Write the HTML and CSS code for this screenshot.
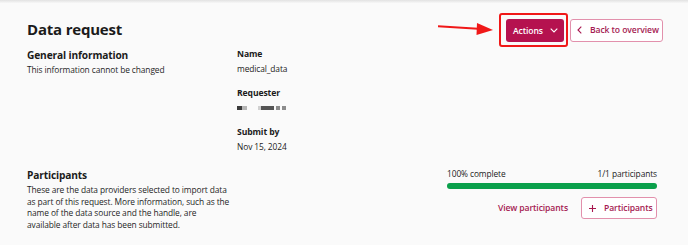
FILE: index.html
```html
<!DOCTYPE html>
<html lang="en">
<head>
  <meta charset="UTF-8"/>
  <title>Data request</title>
  <link rel="stylesheet" href="styles.css">
</head>
<body>
  <div class="topbar"></div>

  <div class="page">
    <div class="header">
      <h1>Data request</h1>
      <div class="header-actions">
        <svg class="arrow" width="56" height="14" viewBox="0 0 56 14">
          <path d="M0 4.3 L40 6.8" stroke="#f01818" stroke-width="2" fill="none"/>
          <path d="M39 1 L55 8 L38.5 13 Z" fill="#f01818"/>
        </svg>
        <div class="highlight">
          <button class="btn btn-primary">Actions
            <svg width="8" height="5" viewBox="0 0 8 5"><path d="M0.7 0.7 L4 4 L7.3 0.7" stroke="#fff" stroke-width="1.1" fill="none"/></svg>
          </button>
        </div>
        <button class="btn btn-outline btn-back">
          <svg width="5" height="8" viewBox="0 0 5 8"><path d="M4.3 0.7 L1 4 L4.3 7.3" stroke="#a8174f" stroke-width="1.1" fill="none"/></svg>
          Back to overview</button>
      </div>
    </div>

    <!-- general information -->
    <div class="section general">
      <div class="intro">
        <h2>General information</h2>
        <p>This information cannot be changed</p>
      </div>
      <dl class="details">
        <dt>Name</dt>
        <dd>medical_data</dd>
        <dt>Requester</dt>
        <dd><span class="blurred"><i class="b1"></i><i class="b2"></i><i class="b3"></i><i class="b4"></i><i class="b5"></i><i class="b6"></i></span></dd>
        <dt>Submit by</dt>
        <dd>Nov 15, 2024</dd>
      </dl>
    </div>

    <!-- participants -->
    <div class="section participants">
      <div class="intro">
        <h2>Participants</h2>
        <p>These are the data providers selected to import data as part of this request. More information, such as the name of the data source and the handle, are available after data has been submitted.</p>
      </div>
      <div class="progress-box">
        <div class="progress-labels">
          <span>100% complete</span>
          <span>1/1 participants</span>
        </div>
        <div class="progress"><div class="progress-fill" style="width: 100%"></div></div>
        <div class="progress-actions">
          <a class="link">View participants</a>
          <button class="btn btn-outline btn-add">
            <svg width="7" height="7" viewBox="0 0 7 7"><path d="M3.5 0 V7 M0 3.5 H7" stroke="#a8174f" stroke-width="1.1"/></svg>
            Participants</button>
        </div>
      </div>
    </div>
  </div>
</body>
</html>
```

FILE: styles.css
```css
* {
  box-sizing: border-box;
}
html, body {
  margin: 0;
  padding: 0;
  background: #fafafa;
  font-family: "Open Sans", "Noto Sans", sans-serif;
  color: #1b1b1b;
  letter-spacing: -0.1px;
}
.topbar {
  height: 3px;
  background: linear-gradient(#e2e2e2, #f7f7f7);
}
.page {
  padding: 0 25px 0 27px;
}
.header {
  display: flex;
  justify-content: space-between;
  align-items: flex-start;
  padding-top: 10px;
}
h1 {
  margin: 6px 0 0;
  font-size: 15px;
  line-height: 20px;
  font-weight: 700;
  letter-spacing: -0.2px;
}
.header-actions {
  display: flex;
  align-items: center;
}
.arrow {
  margin-right: 5px;
  margin-top: -3px;
}
.highlight {
  border: 2px solid #f01818;
  border-radius: 3px;
  padding: 4px 2px 3px 5px;
  margin-right: 2px;
  display: flex;
}
.btn {
  height: 23px;
  display: flex;
  align-items: center;
  white-space: nowrap;
  border-radius: 3px;
  font-family: inherit;
  font-size: 8.6px;
  font-weight: 600;
  letter-spacing: -0.1px;
  cursor: pointer;
}
.btn-primary {
  width: 58px;
  background: #b5124f;
  color: #fff;
  border: none;
  gap: 7px;
  padding: 0 0 0 7px;
}
.btn-outline {
  background: #fff;
  color: #a51a52;
  border: 1px solid #e290ac;
}
.btn-back {
  width: 93px;
  gap: 8px;
  padding: 0 0 0 6px;
}
.btn-add {
  width: 76px;
  height: 22px;
  gap: 8px;
  padding: 0 0 0 7px;
}
.section {
  display: flex;
}
.intro {
  flex: 0 0 210px;
}
h2 {
  margin: 0;
  font-size: 10.2px;
  line-height: 14px;
  font-weight: 700;
  letter-spacing: -0.15px;
}
.intro p {
  margin: 2px 0 0;
  font-size: 8.4px;
  line-height: 11.5px;
  color: #262626;
}
.general {
  margin-top: 1px;
}
.details {
  margin: 1px 0 0;
}
.details dt {
  font-size: 8.6px;
  line-height: 11px;
  font-weight: 700;
  margin-top: 14px;
}
.details dt:first-child {
  margin-top: 0;
}
.details dd {
  margin: 3px 0 0;
  font-size: 8.4px;
  line-height: 11px;
}
.blurred {
  display: flex;
  align-items: center;
  height: 11px;
}
.blurred i {
  height: 4px;
  background: #8c8c8c;
  filter: blur(0.5px);
}
.b1 { width: 5px; background: #3a3a3a !important; }
.b2 { width: 5px; background: #b5b5b5 !important; margin-right: 11px; }
.b3 { width: 3px; background: #d0d0d0 !important; }
.b4 { width: 13px; background: #555 !important; margin-right: 2px; }
.b5 { width: 4px; margin-right: 2px; }
.b6 { width: 4px; }
.participants {
  margin-top: 16px;
  padding-right: 6px;
}
.participants .intro {
  flex: 0 0 204px;
}
.progress-box {
  margin-left: auto;
  width: 210px;
}
.progress-labels {
  display: flex;
  justify-content: space-between;
  font-size: 8.4px;
  line-height: 11px;
}
.progress {
  height: 6px;
  margin-top: 4px;
  background: #e6e6e6;
  border-radius: 3px;
}
.progress-fill {
  height: 100%;
  background: #0aa04b;
  border-radius: 3px;
}
.progress-actions {
  display: flex;
  justify-content: flex-end;
  align-items: center;
  gap: 13px;
  margin-top: 8px;
}
.link {
  color: #a51a52;
  font-size: 8.6px;
  font-weight: 600;
}
```
